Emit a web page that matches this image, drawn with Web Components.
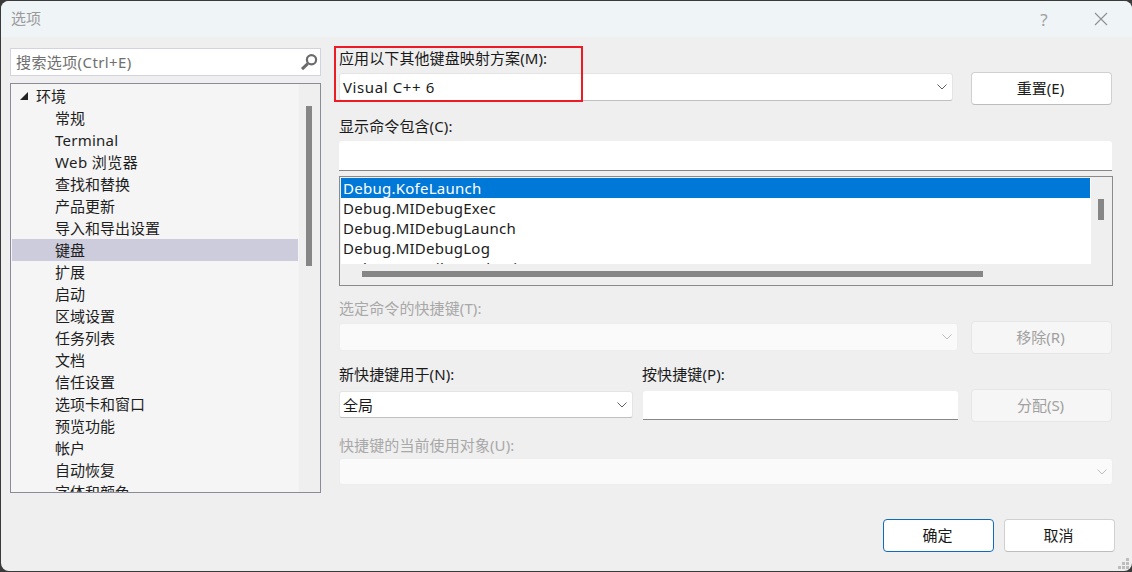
<!DOCTYPE html>
<html><head><meta charset="utf-8">
<style>
html,body{margin:0;padding:0;background:#3a3a3a;width:1132px;height:572px;overflow:hidden}
body{font:15px/20px "Noto Sans","Noto Sans CJK SC",sans-serif;color:#1a1a1a}
</style></head><body>
<x-dialog>
  <x-titlebar slot="title">选项</x-titlebar>
  <x-tree slot="left" placeholder="搜索选项(Ctrl+E)"></x-tree>
  <x-keyboard slot="right"></x-keyboard>
</x-dialog>
<script>
function def(name, css, html, init){
  customElements.define(name, class extends HTMLElement{
    constructor(){super();const s=this.attachShadow({mode:'open'});
      s.innerHTML='<style>'+css+'</style>'+html;}
    connectedCallback(){ if(init) init(this); }
  });
}

def('x-dialog',`
:host{display:flex;flex-direction:column;width:1131px;height:570px;margin:1px 0 0 1px;background:#efefef;border-radius:8px;overflow:hidden;position:relative}
.body{flex:1;display:flex;padding:11px 19px 0 9px}
.l{width:311px;flex:none;margin-right:18px}
.r{flex:1;min-width:0}
.grip{position:absolute;right:3px;bottom:2px;width:11px;height:11px;display:grid;grid-template-columns:repeat(3,3px);grid-auto-rows:3px;gap:1px}
.grip i{background:#bdbdbd}.grip i.n{background:none}
`,`<slot name="title"></slot><div class="body"><div class="l"><slot name="left"></slot></div><div class="r"><slot name="right"></slot></div></div>
<div class="grip"><i class="n"></i><i class="n"></i><i></i><i class="n"></i><i></i><i></i><i></i><i></i><i></i></div>`);

def('x-titlebar',`
:host{display:flex;align-items:center;height:36px;background:#eff4f7;padding:0 24px 0 10px;color:#9a9a9a;font-size:15px}
.t{flex:1;padding-bottom:2px}
.q{width:14px;text-align:center;margin-right:43px;font:17px "Noto Sans",sans-serif;color:#a0a0a0}
svg{display:block}
`,`<span class="t"><slot></slot></span><span class="q">?</span><svg width="14" height="14" viewBox="0 0 14 14"><path d="M1 1l12 12M13 1L1 13" stroke="#8f8f8f" stroke-width="1.1" fill="none"/></svg>`);

def('x-tree',`
:host{display:block}
.search{box-sizing:border-box;height:28px;border:1px solid #d2d2e2;background:#fff;display:flex;align-items:center;padding:0 2px 0 5px;color:#6f6f6f;letter-spacing:.4px}
.search span{flex:1}
.search svg{display:block}
.tree{box-sizing:border-box;margin-top:7px;height:410px;border:1px solid #8a8a98;background:#f5f5f5;display:flex;overflow:hidden}
.rows{flex:1;min-width:0;padding-top:1px;margin-left:1px}
.sb{width:22px;flex:none;background:#efefef;padding:22px 0 0 7px;box-sizing:border-box;border-left:1px solid #f4f4f4}
.sb i{display:block;width:6px;height:160px;background:#868686}
`,`<div class="search"><span id="ph"></span><svg width="18" height="18" viewBox="0 0 18 18"><circle cx="11.5" cy="6.8" r="4.6" fill="#fff" stroke="#6b6b6b" stroke-width="2.2"/><path d="M7.8 10.6L2 16.2" stroke="#6b6b6b" stroke-width="3"/></svg></div>
<div class="tree"><div class="rows" id="rows"></div><div class="sb"><i></i></div></div>`,
el=>{
 const s=el.shadowRoot; s.getElementById('ph').textContent=el.getAttribute('placeholder');
 const rows=s.getElementById('rows'); if(rows.children.length) return;
 const h=document.createElement('x-row'); h.setAttribute('head',''); h.textContent='环境'; rows.append(h);
 ['常规','Terminal','Web 浏览器','查找和替换','产品更新','导入和导出设置','键盘','扩展','启动','区域设置','任务列表','文档','信任设置','选项卡和窗口','预览功能','帐户','自动恢复','字体和颜色'].forEach(t=>{
  const r=document.createElement('x-row'); r.textContent=t;
  if(t==='键盘') r.setAttribute('sel','');
  if(t==='Terminal') r.style.letterSpacing='.25px';
  if(t.startsWith('Web')) r.style.letterSpacing='.4px';
  rows.append(r);
 });
});

def('x-row',`
:host{display:flex;align-items:center;height:22px;padding-left:43px;white-space:nowrap;color:#1e1e1e}
:host([sel]){background:#ccccdc}
:host([head]){padding-left:8px}
svg{display:none;margin-right:8px}
:host([head]) svg{display:block}
`,`<svg width="8" height="8" viewBox="0 0 8 8"><path d="M0 8L8 0v8z" fill="#222"/></svg><slot></slot>`);

def('x-label',`
:host{display:block;height:20px;line-height:20px;white-space:nowrap;color:#1a1a1a;letter-spacing:.1px}
:host([off]){color:#a8a8a8}
`,`<slot></slot>`);

def('x-combo',`
:host{display:flex;align-items:center;box-sizing:border-box;height:28px;background:#fff;border:1px solid #e4e4e4;border-bottom:1px solid #c0c0c0;border-radius:3px;padding:0 5px 0 3px;white-space:nowrap;color:#1a1a1a}
:host([off]){background:#fafafa;border-color:#ededed}
span{flex:1}
svg{display:block;stroke:#5f5f5f}
:host([off]) svg{stroke:#bcbcbc}
`,`<span><slot></slot></span><svg width="10" height="6" viewBox="0 0 10 6"><path d="M.5.5L5 5l4.500-4.500" fill="none"/></svg>`);

def('x-input',`
:host{display:block;box-sizing:border-box;background:#fff;border-bottom:1px solid #868686;border-radius:3px 3px 0 0}
`,``);

def('x-btn',`
:host{display:flex;align-items:center;justify-content:center;box-sizing:border-box;height:33px;padding:0 2px 2px 0;background:#fff;border:1px solid #d0d0d0;border-bottom-color:#bdbdbd;border-radius:4px;color:#1a1a1a}
:host([off]){background:#f6f6f6;border-color:#e6e6e6;color:#a0a0a0}
:host([primary]){border-color:#0f6cbd}
`,`<slot></slot>`);

def('x-cmdlist',`
:host{display:flex;box-sizing:border-box;height:110px;border:1px solid #8a8a8a;background:#efefef;overflow:hidden;letter-spacing:.25px}
.main{flex:1;min-width:0;display:flex;flex-direction:column}
.vp{margin:1px 0 0 1px;height:86px;width:750px;background:#fff;overflow:hidden;white-space:nowrap}
.vp div{height:20px;line-height:20px;padding-left:2px;margin-right:1px}
.vp div.s{background:#0078d7;color:#fff}
.hs{padding:7px 0 0 22px}.hs i{display:block;width:621px;height:6px;background:#868686}
.vs{width:21px;flex:none;padding:22px 0 0 7px;box-sizing:border-box}
.vs i{display:block;width:6px;height:21px;background:#868686}
`,`<div class="main"><div class="vp"><div class="s">Debug.KofeLaunch</div><div>Debug.MIDebugExec</div><div>Debug.MIDebugLaunch</div><div>Debug.MIDebugLog</div><div>Debug.NewFileBreakpoint</div></div><div class="hs"><i></i></div></div><div class="vs"><i></i></div>`);

def('x-keyboard',`
:host{display:block;width:774px;position:relative}
.row{display:flex;align-items:flex-start}
.mark{position:absolute;left:-5px;top:-2px;width:249px;height:56px;box-sizing:border-box;border:2px solid #ed1c24;pointer-events:none}
`,`
<x-label>应用以下其他键盘映射方案(M):</x-label>
<div class="row" style="margin-top:4px;height:44px">
  <x-combo style="width:614px;margin-top:1px"><span style="letter-spacing:.6px">Visual C++ 6</span></x-combo>
  <x-btn style="width:141px;margin-left:18px">重置(E)</x-btn>
</div>
<x-label>显示命令包含(C):</x-label>
<x-input style="height:30px;width:773px;margin-top:5px"></x-input>
<x-cmdlist style="margin-top:5px"></x-cmdlist>
<x-label off style="margin-top:12px">选定命令的快捷键(T):</x-label>
<div class="row" style="height:33px;margin-top:4px">
  <x-combo off style="width:619px;margin-top:1px"></x-combo>
  <x-btn off style="width:141px;margin-left:13px;margin-top:-1px">移除(R)</x-btn>
</div>
<div class="row" style="margin-top:9px;height:20px">
  <x-label style="width:303px">新快捷键用于(N):</x-label><x-label>按快捷键(P):</x-label>
</div>
<div class="row" style="margin-top:6px;height:33px">
  <x-combo style="width:294px;height:27px;margin-top:1px">全局</x-combo>
  <x-input style="width:315px;height:29px;margin:1px 0 0 10px"></x-input>
  <x-btn off style="width:141px;margin-left:13px;margin-top:-1px">分配(S)</x-btn>
</div>
<x-label off style="margin-top:12px">快捷键的当前使用对象(U):</x-label>
<x-combo off style="margin-top:3px;height:27px;width:774px"></x-combo>
<div class="row" style="margin-top:34px;width:776px;justify-content:flex-end;gap:10px">
  <x-btn primary style="width:111px">确定</x-btn><x-btn style="width:111px">取消</x-btn>
</div>
<div class="mark"></div>`);
</script>
</body></html>
